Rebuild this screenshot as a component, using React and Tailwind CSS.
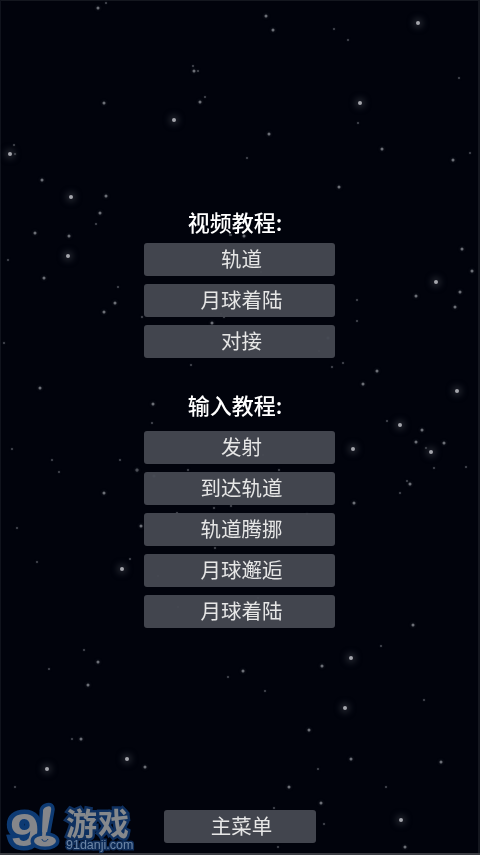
import React from 'react';

const cjk = 'font-["Noto_Sans_CJK_SC","Liberation_Sans",sans-serif]';

// x, y, brightness (0 faint, 1 normal, 2 bright)
const stars = [
  [98,8,1],[106,3,0],[193,66,0],[194,71,1],[198,71,0],[205,97,0],[200,102,1],[104,103,1],[174,120,2],[14,145,0],
  [10,154,2],[15,154,0],[42,180,1],[71,197,2],[106,196,1],[100,213,1],[96,224,0],[35,233,1],[69,236,1],[230,235,0],
  [266,16,1],[273,30,1],[334,29,0],[348,40,0],[418,23,2],[459,78,0],[360,103,2],[358,123,0],[269,134,1],[382,149,1],
  [247,158,0],[453,160,1],[470,153,0],[339,187,1],[244,236,1],[231,235,0],[68,256,2],[8,260,0],[44,278,1],[118,287,0],
  [115,303,1],[104,312,1],[4,343,0],[40,388,1],[12,449,0],[52,460,0],[59,472,0],[120,460,0],[137,470,1],[104,493,1],
  [462,249,1],[472,271,1],[436,282,2],[460,292,1],[455,307,1],[416,296,1],[357,300,0],[357,321,0],[343,363,0],[377,371,1],
  [363,384,1],[457,391,2],[387,421,0],[400,425,2],[422,430,1],[416,442,1],[444,443,1],[426,448,0],[431,452,2],[353,449,2],
  [434,468,0],[466,467,0],[407,481,0],[410,484,1],[400,493,0],[354,503,1],[17,528,0],[141,526,1],[37,562,0],[130,559,0],
  [122,569,2],[158,576,0],[178,607,0],[215,548,0],[84,650,0],[98,662,1],[49,669,0],[88,685,1],[228,677,0],[72,739,0],
  [81,739,1],[127,759,2],[47,769,2],[145,767,1],[15,787,0],[413,625,1],[381,646,0],[351,658,2],[322,666,1],[243,671,1],
  [265,691,0],[345,708,2],[424,700,0],[309,730,1],[351,759,1],[441,762,1],[318,769,0],[289,787,1],[386,787,0],[321,803,1],
  [274,808,0],[324,824,0],[401,820,2],[405,847,1],[278,847,0],[258,598,0],[261,272,0],[221,314,0],[224,317,0],[212,323,1],
  [142,317,0],[328,338,1],[319,351,0],[191,365,0],[332,367,0],[153,404,1],[152,423,0],[263,455,0],[137,470,0],[188,470,0],
  [154,476,1],[279,470,0],[214,508,0],[231,506,0],[177,513,0],[307,514,0],[204,580,0],
];

const starClass = [
  'w-[2px] h-[2px] bg-[#4a4c55] shadow-[0_0_2px_#2a2c34]',
  'w-[3px] h-[3px] bg-[#6c6f77] shadow-[0_0_3px_#33353d]',
  'w-[4px] h-[4px] bg-[#a4a6ac] shadow-[0_0_7px_2px_#33363f]',
];

function Star({ x, y, level }) {
  return (
    <span
      className={`absolute rounded-full -translate-x-1/2 -translate-y-1/2 ${starClass[level]}`}
      style={{ left: x, top: y }}
    />
  );
}

function MenuButton({ label, wide = true }) {
  return (
    <button
      className={`${wide ? 'w-[191px]' : 'w-[152px]'} h-[33px] rounded-[3px] bg-[#464952]/95 text-[20.5px] leading-[30px] pb-[3px] pl-[4px] text-[#e6e6e6] text-center ${cjk}`}
    >
      {label}
    </button>
  );
}

function Section({ title, items, headClass }) {
  return (
    <div className="flex flex-col items-center">
      <h2 className={`${headClass} pr-[9px] text-[22px] leading-[26px] font-medium text-white ${cjk}`}>{title}</h2>
      <div className="flex flex-col gap-[8px]">
        {items.map((label, i) => (
          <MenuButton key={i} label={label} />
        ))}
      </div>
    </div>
  );
}

function Watermark() {
  return (
    <div className="absolute left-0 bottom-0 w-[136px] h-[55px] [filter:blur(0.5px)]">
      <span className='absolute left-[10px] top-[6px] origin-left scale-x-[1.12] text-[47px] leading-[48px] font-bold text-[#85868a] font-["Liberation_Sans",sans-serif] [-webkit-text-stroke:9px_#0d3a73] [paint-order:stroke_fill]'>
        9
      </span>
      {/* the joystick that stands in for the 1 */}
      <svg className="absolute left-[30px] top-[2px]" width="34" height="50" viewBox="0 0 34 50">
        <g stroke="#0d3a73" strokeWidth="7" strokeLinejoin="round" paintOrder="stroke" fill="#85868a">
          <path d="M16 5c4-2 6 0 5 4l-5 27h-4l1-27c0-2 1-3 3-4z" />
          <ellipse cx="15" cy="39" rx="11" ry="5.5" />
        </g>
        <path d="M16 6c4-2 5 0 4 4l-5 27h-3l1-27c0-2 1-3 3-4z" fill="#85868a" />
        <path d="M12 37c0 3 5 3 6 0" fill="none" stroke="#0d3a73" strokeWidth="1" />
      </svg>
      <span className={`absolute left-[66px] top-[7px] text-[31px] leading-[30px] font-bold tracking-[1px] whitespace-nowrap text-[#85888c] ${cjk} [-webkit-text-stroke:5px_#0e3060] [paint-order:stroke_fill]`}>
        游戏
      </span>
      <span className='absolute left-[66px] top-[39px] text-[12.5px] leading-[13px] whitespace-nowrap text-[#6d86a6] font-["Liberation_Sans",sans-serif] [-webkit-text-stroke:3px_#0e2c58] [paint-order:stroke_fill]'>
        91danji.com
      </span>
    </div>
  );
}

export default function App() {
  return (
    <div className="relative w-[480px] h-[855px] overflow-hidden bg-[#01030c] flex flex-col items-center pt-[208px] pb-[12px] pr-[1px] shadow-[inset_1px_0_0_#10131c,inset_-2px_0_0_#14171f,inset_0_1px_0_#14171f]">
      <div className="absolute inset-0 [filter:blur(0.4px)]">
        {stars.map(([x, y, level], i) => (
          <Star key={i} x={x} y={y} level={level} />
        ))}
      </div>
      <div className="relative flex flex-col items-center gap-[33px] [filter:blur(0.35px)]">
        <Section title="视频教程:" items={['轨道', '月球着陆', '对接']} headClass="h-[35px]" />
        <Section title="输入教程:" items={['发射', '到达轨道', '轨道腾挪', '月球邂逅', '月球着陆']} headClass="h-[40px]" />
      </div>
      <div className="relative mt-auto [filter:blur(0.35px)]">
        <MenuButton label="主菜单" wide={false} />
      </div>
      <Watermark />
      <div className="absolute left-0 right-0 bottom-0 h-[2px] bg-[#3a3c42]" />
    </div>
  );
}
